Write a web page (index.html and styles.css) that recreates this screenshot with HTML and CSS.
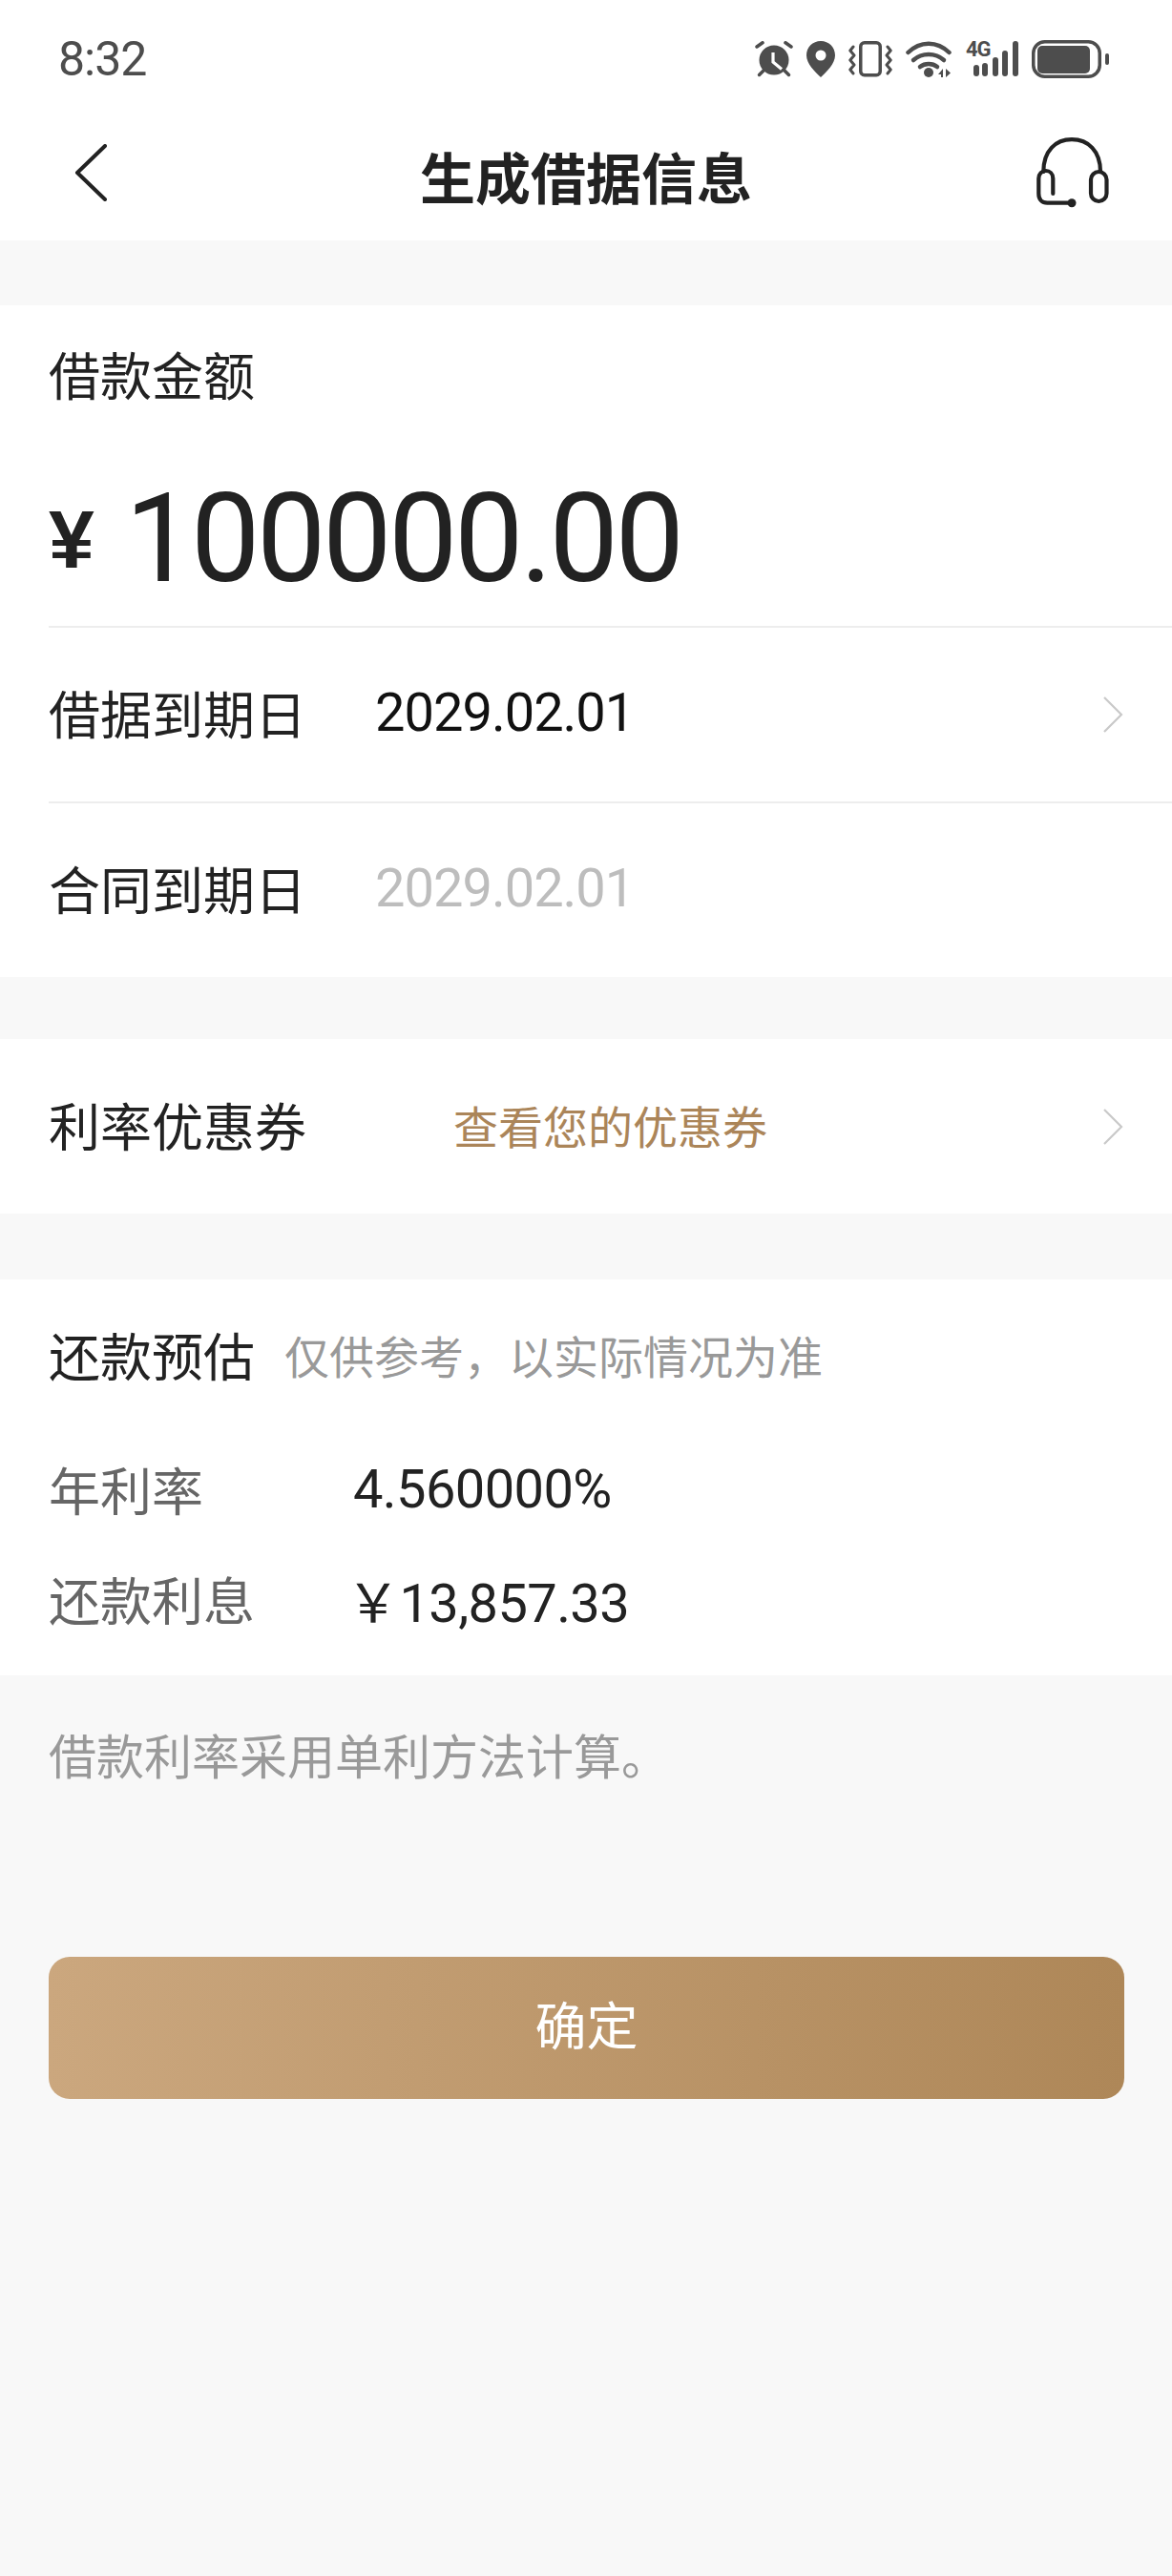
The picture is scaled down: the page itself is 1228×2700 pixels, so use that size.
FILE: index.html
```html
<!DOCTYPE html>
<html lang="zh-CN">
<head>
<meta charset="utf-8">
<title>生成借据信息</title>
<link rel="stylesheet" href="styles.css">
</head>
<body>
<div class="page">
  <header class="top">
    <div class="status">
      <span class="time">8:32</span>
      <div class="status-icons">
        <svg class="si" width="40" height="38" viewBox="0 0 40 38"><g fill="#4d4d4d"><circle cx="20" cy="20" r="15.500"/></g><g fill="none" stroke="#4d4d4d" stroke-width="3.500" stroke-linecap="round"><path d="M2 6 8 1.800M38 6 32 1.800"/><path d="M9 31 4.500 35.500M31 31 35.500 35.500"/></g><path d="M19 12v10l9 7.500" fill="none" stroke="#fff" stroke-width="3.200"/></svg>
        <svg class="si" width="30" height="38" viewBox="0 0 30 38"><path fill="#4d4d4d" d="M15 0C6.500 0 0 6.500 0 15c0 9 9 17 15 23 6-6 15-14 15-23C30 6.500 23.500 0 15 0z"/><circle cx="15" cy="15" r="5.500" fill="#fff"/></svg>
        <svg class="si" width="46" height="38" viewBox="0 0 46 38"><rect x="12.750" y="1.750" width="20.500" height="34" rx="4" fill="none" stroke="#4d4d4d" stroke-width="3.500"/><path d="M5 6 1.800 10 6 15 1.800 20 6 25 1.800 30 5 34M41 6 44.200 10 40 15 44.200 20 40 25 44.200 30 41 34" fill="none" stroke="#4d4d4d" stroke-width="3" stroke-linecap="round" stroke-linejoin="round"/></svg>
        <svg class="si" width="49" height="38" viewBox="0 0 49 38"><g fill="none" stroke="#4d4d4d" stroke-width="4.500" stroke-linecap="round"><path d="M2.500 12C15 -.5 33 -.5 45.500 12"/><path d="M8 20c9-8 23-8 32 0"/><path d="M15 27c5-4 13-4 18 0"/></g><circle cx="24" cy="33" r="5" fill="#4d4d4d"/><path fill="#4d4d4d" d="M39 38v-9l-5 6h3v3zM42 29v9l5-4.500z"/></svg>
        <div class="net"><span class="net-g">4G</span><svg width="55" height="38" viewBox="0 0 55 38"><g fill="#4d4d4d"><rect x="8" y="25" width="6" height="12" rx="3"/><rect x="17" y="23" width="6" height="14" rx="3"/><rect x="28" y="17" width="6" height="20" rx="3"/><rect x="38" y="10" width="6" height="27" rx="3"/><rect x="49" y="0" width="6" height="37" rx="3"/></g></svg></div>
        <svg class="si" width="81" height="42" viewBox="0 0 81 42"><rect x="1.750" y="2.750" width="69.500" height="36.500" rx="12" fill="none" stroke="#4d4d4d" stroke-width="3.500"/><rect x="6" y="7" width="55" height="29" rx="5" fill="#4d4d4d"/><rect x="77" y="15" width="4" height="12" rx="2" fill="#4d4d4d"/></svg>
      </div>
    </div>
    <nav class="nav">
      <svg class="back" width="34" height="60" viewBox="0 0 34 60"><path d="M32 2 3 30l29 28" fill="none" stroke="#222" stroke-width="4" stroke-linecap="round" stroke-linejoin="round"/></svg>
      <h1 class="title">生成借据信息</h1>
      <svg class="headset" width="76" height="74" viewBox="0 0 76 74"><g fill="none" stroke="#222" stroke-width="4.200" stroke-linecap="round"><path d="M7.300 36C7.300 14 20 2.200 37 2.200S67 14 67 36"/><path d="M17.300 59V43c0-5-3.500-8-7.500-8s-7.500 3-7.500 8v16c0 6 3.500 9.700 9 9.700H37"/><rect x="57" y="36" width="16.500" height="31" rx="8.250"/></g><circle cx="37" cy="68.700" r="4.500" fill="#222"/></svg>
    </nav>
  </header>

  <section class="card">
    <div class="amount-label">借款金额</div>
    <div class="amount"><span class="yen">¥</span><span class="num">100000.00</span></div>
    <div class="row border">
      <span class="label">借据到期日</span><span class="val">2029.02.01</span>
      <svg class="chev" width="22" height="40" viewBox="0 0 22 40"><path d="M2 2l18 18L2 38" fill="none" stroke="#c9c9c9" stroke-width="2.200"/></svg>
    </div>
    <div class="row border">
      <span class="label">合同到期日</span><span class="val muted">2029.02.01</span>
    </div>
  </section>

  <section class="card coupon">
    <div class="row">
      <span class="label">利率优惠券</span><span class="link">查看您的优惠券</span>
      <svg class="chev" width="22" height="40" viewBox="0 0 22 40"><path d="M2 2l18 18L2 38" fill="none" stroke="#c9c9c9" stroke-width="2.200"/></svg>
    </div>
  </section>

  <section class="card est">
    <div class="est-head"><span class="est-title">还款预估</span><span class="est-hint">仅供参考，以实际情况为准</span></div>
    <div class="est-row"><span class="est-label">年利率</span><span class="est-val">4.560000%</span></div>
    <div class="est-row"><span class="est-label">还款利息</span><span class="est-val money">￥13,857.33</span></div>
  </section>

  <p class="note">借款利率采用单利方法计算。</p>
  <button class="confirm">确定</button>
</div>
</body>
</html>
```

FILE: styles.css
```css
* { box-sizing: border-box; }
html, body { margin: 0; padding: 0; }
body { background: #f8f8f8; font-family: "Noto Sans CJK SC", "Noto Sans", sans-serif; color: #222; }
.page { width: 1228px; height: 2700px; overflow: hidden; }
.top { background: #fff; height: 252px; }
.status { height: 110px; padding: 13px 66px 0 61px; display: flex; justify-content: space-between; align-items: center; }
.time { font-family: Roboto, sans-serif; font-size: 50px; letter-spacing: -1px; color: #4d4d4d; line-height: 50px; }
.status-icons { display: flex; align-items: center; gap: 14px; }
.si { display: block; flex: none; }
.net { position: relative; width: 55px; height: 38px; }
.net-g { position: absolute; left: 0; top: -2px; font-family: Roboto, sans-serif; font-size: 22px; font-weight: 700; letter-spacing: -1px; line-height: 22px; color: #4d4d4d; }
.net svg { display: block; }
.nav { height: 142px; padding: 0 66px; display: grid; grid-template-columns: 1fr auto 1fr; align-items: center; }
.back { margin-left: 12px; }
.headset { justify-self: end; }
.title { margin: 0; padding-top: 5px; font-size: 58px; font-weight: 700; line-height: 80px; color: #222; }
.card { background: #fff; margin-top: 68px; }
.amount-label { padding: 40px 0 0 51px; font-size: 54px; line-height: 64px; color: #222; }
.amount { height: 232px; padding: 91px 0 0 51px; white-space: nowrap; line-height: 100px; }
.yen { display: inline-block; width: 80px; vertical-align: 14px; font-family: "Liberation Sans", sans-serif; font-weight: 700; font-size: 86px; line-height: 84px; }
.num { font-family: Roboto, sans-serif; font-size: 129px; letter-spacing: -3.500px; line-height: 100px; }
.row { position: relative; height: 184px; margin-left: 51px; padding-bottom: 5px; display: flex; align-items: center; }
.border { border-top: 2px solid #ededed; }
.label { width: 342px; flex: none; font-size: 54px; color: #222; }
.val { font-family: Roboto, sans-serif; font-size: 56px; letter-spacing: -1px; color: #111; }
.muted { color: #bdbdbd; }
.chev { position: absolute; right: 51px; top: 50%; transform: translateY(-50%); }
.link { font-size: 47px; color: #ab8559; margin-left: 82px; }
.coupon { margin-top: 65px; }
.coupon .row { height: 183px; }
.est { margin-top: 69px; height: 415px; padding: 45px 0 0 51px; }
.est-head { display: flex; align-items: center; height: 66px; margin-bottom: 51px; }
.est-title { font-size: 54px; width: 247px; flex: none; }
.est-hint { font-size: 47px; color: #999; }
.est-row { display: flex; align-items: center; height: 115px; }
.est-label { font-size: 54px; color: #666; width: 319px; flex: none; }
.est-val { font-family: Roboto, sans-serif; font-size: 56px; letter-spacing: -0.600px; color: #222; }
.money { margin-left: -7px; }
.note { margin: 47px 0 0 51px; font-size: 50px; line-height: 70px; color: #999; }
.confirm { display: block; width: 1127px; height: 149px; margin: 178px 0 0 51px; padding: 0 0 10px; border: 0; border-radius: 22px; background: linear-gradient(90deg, #cba77e, #ae8758); color: #fff; font-family: inherit; font-size: 54px; }
```
